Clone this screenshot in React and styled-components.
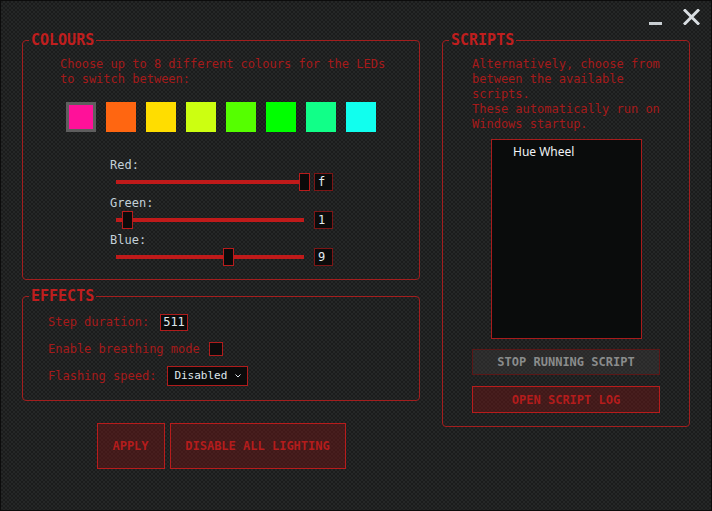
import React from "react";
import styled, { createGlobalStyle } from "styled-components";

const Global = createGlobalStyle`
  html, body { margin: 0; padding: 0; background: #111; }
  * { box-sizing: border-box; }
`;

const MONO = `"DejaVu Sans Mono", "Liberation Mono", monospace`;
const RED = "#a61a1a";
const LINE = "#a31e1e";

const Window = styled.div`
  width: 712px;
  height: 511px;
  border: 1px solid #0c0c0c;
  background-color: #1b1c1c;
  background-image:
    linear-gradient(45deg, #252727 25%, transparent 25%, transparent 75%, #252727 75%),
    linear-gradient(45deg, #252727 25%, transparent 25%, transparent 75%, #252727 75%);
  background-size: 4px 4px;
  background-position: 0 0, 2px 2px;
  display: flex;
  flex-direction: column;
  font-family: ${MONO};
  overflow: hidden;
`;

const TitleBar = styled.div`
  height: 31px;
  display: flex;
  justify-content: flex-end;
  align-items: flex-start;
  gap: 21px;
  padding: 8px 11px 0 0;
`;

const Minimize = styled.div`
  width: 13px;
  height: 16px;
  border-bottom: 3px solid #c9ced2;
`;

const Main = styled.div`
  display: grid;
  grid-template-columns: 398px 248px;
  column-gap: 22px;
  padding-left: 21px;
  align-items: start;
`;

const Column = styled.div`
  display: flex;
  flex-direction: column;
`;

const Group = styled.fieldset`
  margin: 0;
  margin-top: ${(p) => p.$top || 0}px;
  padding: 0;
  border: 1px solid ${LINE};
  border-radius: 4px;
  min-width: 0;
`;

const Legend = styled.legend`
  margin-left: 6px;
  padding: 0 2px;
  font: 700 15px/16px ${MONO};
  color: #c01e1e;
`;

const Body = styled.div`
  padding: ${(p) => p.$pad};
`;

const Blurb = styled.p`
  margin: 0;
  font-size: 12px;
  line-height: 15px;
  color: ${RED};
  width: ${(p) => p.$width || "auto"};
`;

const Swatches = styled.div`
  display: flex;
  gap: 10px;
  margin: 15px 0 0 6px;
`;

const Swatch = styled.div`
  width: 30px;
  height: 30px;
  background: ${(p) => p.$color};
  border: ${(p) => (p.$selected ? "3px solid #5e5e5e" : "none")};
`;

const Sliders = styled.div`
  display: flex;
  flex-direction: column;
  margin: 26px 0 0 49px;
`;

const SliderLabel = styled.div`
  font-size: 12px;
  line-height: 15px;
  color: #c3d0d8;
  margin: ${(p) => (p.$first ? "0" : "4.5px")} 0 0 1px;
`;

const SliderRow = styled.div`
  display: flex;
  align-items: center;
  height: 18px;
`;

const SliderBox = styled.div`
  position: relative;
  width: 201px;
  height: 18px;
`;

const Track = styled.div`
  position: absolute;
  left: 7px;
  right: 6px;
  top: 7px;
  height: 4px;
  background: #c01a1a;
`;

const Thumb = styled.div`
  position: absolute;
  top: 0;
  width: 11px;
  height: 18px;
  background: #0a0a0a;
  border: 1px solid #b81c1c;
`;

const ValueBox = styled.div`
  margin-left: 4px;
  width: 19px;
  height: 18px;
  border: 1px solid #7c1616;
  background: #0b0b0b;
  color: #e4ecf0;
  font-size: 12px;
  line-height: 16px;
  padding-left: 3px;
`;

const EffectRows = styled.div`
  display: flex;
  flex-direction: column;
  gap: 7px;
`;

const EffectRow = styled.div`
  display: flex;
  align-items: center;
  height: 20px;
  font-size: 12px;
  color: ${RED};
`;

const Field = styled.div`
  margin-left: ${(p) => p.$gap}px;
  width: ${(p) => p.$w}px;
  height: ${(p) => p.$h}px;
  border: 1px solid #b01c1c;
  background: #0b0b0b;
  color: #dfe7ec;
  font-size: ${(p) => p.$fs || 12}px;
  line-height: ${(p) => p.$h - 2}px;
  padding-left: ${(p) => p.$pl || 0}px;
  display: flex;
  align-items: center;
  justify-content: space-between;
  padding-right: 6px;
`;

const Chevron = styled.svg`
  width: 6px;
  height: 4px;
  display: block;
`;

const ButtonRow = styled.div`
  display: flex;
  justify-content: center;
  gap: 5px;
  margin-top: 22px;
`;

const Button = styled.button`
  width: ${(p) => p.$w}px;
  height: ${(p) => p.$h}px;
  margin: 0;
  padding: 0;
  font: 700 12px ${MONO};
  color: ${(p) => (p.$muted ? "#8a8c8c" : "#b41c1c")};
  background: ${(p) => (p.$muted ? "rgba(70, 66, 66, 0.35)" : "rgba(120, 18, 18, 0.42)")};
  border: 1px solid ${(p) => (p.$muted ? "#5a1717" : "#b81c1c")};
  display: block;
`;

const ScriptList = styled.div`
  width: 151px;
  height: 200px;
  margin: 7px 0 0 19px;
  background: #0a0c0c;
  border: 1px solid #a81c1c;
  padding: 4px 0 0 21px;
  font: 12px/16px "Noto Sans", "Open Sans", sans-serif;
  color: #f2f4f6;
`;

const ScriptButtons = styled.div`
  display: flex;
  flex-direction: column;
  gap: 11px;
  margin-top: 10px;
`;

const colours = ["#ff1199", "#ff6611", "#ffdd00", "#ccff11", "#55ff00", "#00ff00", "#11ff88", "#11ffee"];

const sliders = [
  { name: "Red", value: 15, hex: "f" },
  { name: "Green", value: 1, hex: "1" },
  { name: "Blue", value: 9, hex: "9" },
];

export default function App() {
  return (
    <>
      <Global />
      <Window>
        <TitleBar>
          <Minimize />
          <svg width="17" height="16" viewBox="0 0 17 16">
            <path d="M2 1.5 L15 14.5 M15 1.5 L2 14.5" stroke="#d9dee2" strokeWidth="3" strokeLinecap="square" />
          </svg>
        </TitleBar>
        <Main>
          <Column>
            <Group>
              <Legend>COLOURS</Legend>
              <Body $pad="9px 0 13px 37px">
                <Blurb>
                  Choose up to 8 different colours for the LEDs
                  <br />
                  to switch between:
                </Blurb>
                <Swatches>
                  {colours.map((c, i) => (
                    <Swatch key={c} $color={c} $selected={i === 0} />
                  ))}
                </Swatches>
                <Sliders>
                  {sliders.map((s, i) => (
                    <React.Fragment key={s.name}>
                      <SliderLabel $first={i === 0}>{s.name}:</SliderLabel>
                      <SliderRow>
                        <SliderBox>
                          <Track />
                          <Thumb style={{ left: `${(s.value * 190) / 15}px` }} />
                        </SliderBox>
                        <ValueBox>{s.hex}</ValueBox>
                      </SliderRow>
                    </React.Fragment>
                  ))}
                </Sliders>
              </Body>
            </Group>
            <Group $top={8}>
              <Legend>EFFECTS</Legend>
              <Body $pad="8px 0 14px 25px">
                <EffectRows>
                  <EffectRow>
                    Step duration:
                    <Field $gap={11} $w={28} $h={17} $pl={2}>511</Field>
                  </EffectRow>
                  <EffectRow>
                    Enable breathing mode
                    <Field $gap={9} $w={14} $h={14} />
                  </EffectRow>
                  <EffectRow>
                    Flashing speed:
                    <Field $gap={11} $w={81} $h={20} $pl={6} $fs={11}>
                      Disabled
                      <Chevron viewBox="0 0 6 4">
                        <path d="M0.5 0.5 L3 3 L5.5 0.5" stroke="#dfe7ec" strokeWidth="1" fill="none" />
                      </Chevron>
                    </Field>
                  </EffectRow>
                </EffectRows>
              </Body>
            </Group>
            <ButtonRow>
              <Button $w={68} $h={46}>APPLY</Button>
              <Button $w={176} $h={46}>DISABLE ALL LIGHTING</Button>
            </ButtonRow>
          </Column>
          <Column>
            <Group>
              <Legend>SCRIPTS</Legend>
              <Body $pad="9px 0 13px 29px">
                <Blurb $width="200px">
                  Alternatively, choose from between the available scripts.
                  <br />
                  These automatically run on Windows startup.
                </Blurb>
                <ScriptList>Hue Wheel</ScriptList>
                <ScriptButtons>
                  <Button $w={188} $h={26} $muted>STOP RUNNING SCRIPT</Button>
                  <Button $w={188} $h={27}>OPEN SCRIPT LOG</Button>
                </ScriptButtons>
              </Body>
            </Group>
          </Column>
        </Main>
      </Window>
    </>
  );
}
